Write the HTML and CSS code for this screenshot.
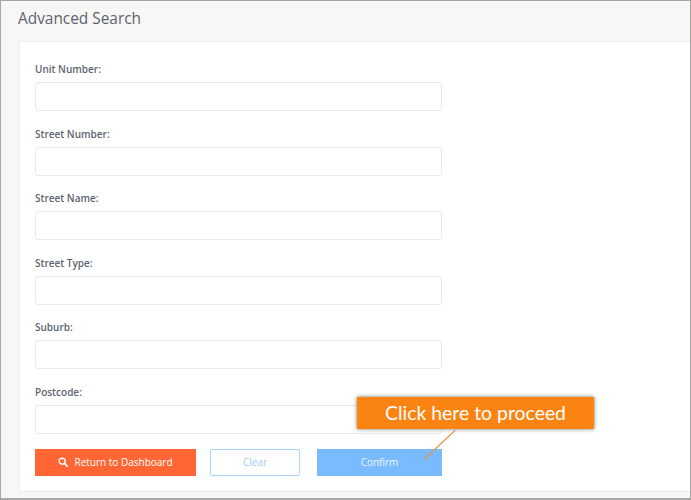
FILE: index.html
```html
<!DOCTYPE html>
<html lang="en">
<head>
<meta charset="utf-8">
<title>Advanced Search</title>
<link rel="stylesheet" href="styles.css">
</head>
<body>
<div class="frame">
  <h1 class="title">Advanced Search</h1>
  <main class="panel">
    <form class="form">
      <div class="field"><label>Unit Number:</label><div class="input"></div></div>
      <div class="field"><label>Street Number:</label><div class="input"></div></div>
      <div class="field"><label>Street Name:</label><div class="input"></div></div>
      <div class="field"><label>Street Type:</label><div class="input"></div></div>
      <div class="field"><label>Suburb:</label><div class="input"></div></div>
      <div class="field"><label>Postcode:</label><div class="input"></div></div>
      <div class="actions">
        <div class="btn btn-return">
          <svg class="search-icon" viewBox="0 0 12 12" aria-hidden="true"><circle cx="5" cy="5" r="3.6" fill="none" stroke="#fff" stroke-width="1.8"/><path d="M7.8 7.8L11 11" stroke="#fff" stroke-width="2.1" stroke-linecap="round"/></svg>
          <span>Return to Dashboard</span>
        </div>
        <div class="btn btn-clear">Clear</div>
        <div class="btn btn-confirm">Confirm</div>
      </div>
    </form>
  </main>
  <div class="callout">Click here to proceed</div>
  <svg class="leader" viewBox="0 0 32 30" aria-hidden="true"><path d="M31.5 0L0.5 29" stroke="#e0924a" stroke-width="1.2" fill="none"/></svg>
</div>
</body>
</html>
```
FILE: styles.css
```css
* { box-sizing: border-box; }
html, body { margin: 0; padding: 0; }
body { width: 691px; height: 500px; overflow: hidden; background: #fff; font-family: "Open Sans", sans-serif; }
.frame {
  position: relative;
  width: 691px;
  height: 500px;
  background: #f8f7f5;
  border-top: 1px solid #a8a6a2;
  border-left: 1px solid #a8a6a2;
  border-right: 1px solid #a8a6a2;
  border-bottom: 2px solid #a8a6a2;
  padding: 0 0 0 17px;
  display: flex;
  flex-direction: column;
}
.title {
  margin: 0;
  height: 40px;
  padding-top: 7px;
  font-size: 15.4px;
  line-height: 22px;
  font-weight: 400;
  color: #5b6470;
}
.panel {
  background: #fff;
  border: 1px solid #eeedeb;
  border-right: 0;
  height: 451px;
  margin-left: 1px;
  padding: 0 0 0 15px;
}
.form { width: 407px; }
.field { height: 64.6px; padding-top: 21px; }
.field label {
  display: block;
  height: 19px;
  font-size: 10px;
  line-height: 13px;
  font-weight: 600;
  color: #5b6470;
}
.input {
  height: 29px;
  border: 1px solid #e8e8e8;
  border-radius: 3px;
  background: #fff;
}
.actions {
  display: flex;
  align-items: stretch;
  margin-top: 19px;
  height: 27px;
}
.btn {
  display: flex;
  align-items: center;
  justify-content: center;
  font-size: 10px;
  font-weight: 400;
}
.btn-return { width: 161px; background: #ff6633; color: #fff; gap: 6px; }
.btn-clear { width: 90px; margin-left: 14px; background: #fff; border: 1px solid #a9d3fb; border-radius: 2px; color: #9ccbf8; }
.btn-confirm { width: 125px; margin-left: 17px; background: #7abbff; color: #eef6ff; }
.search-icon { width: 10px; height: 10px; }
.callout {
  position: absolute;
  left: 356px;
  top: 396px;
  width: 237px;
  height: 32px;
  background: #fb8312;
  box-shadow: 0 0 4px rgba(0,0,0,.55);
  color: #fff;
  font-family: "Lato", sans-serif;
  font-size: 19.4px;
  line-height: 32px;
  text-align: center;
}
.leader {
  position: absolute;
  left: 423px;
  top: 429px;
  width: 32px;
  height: 30px;
}
```
